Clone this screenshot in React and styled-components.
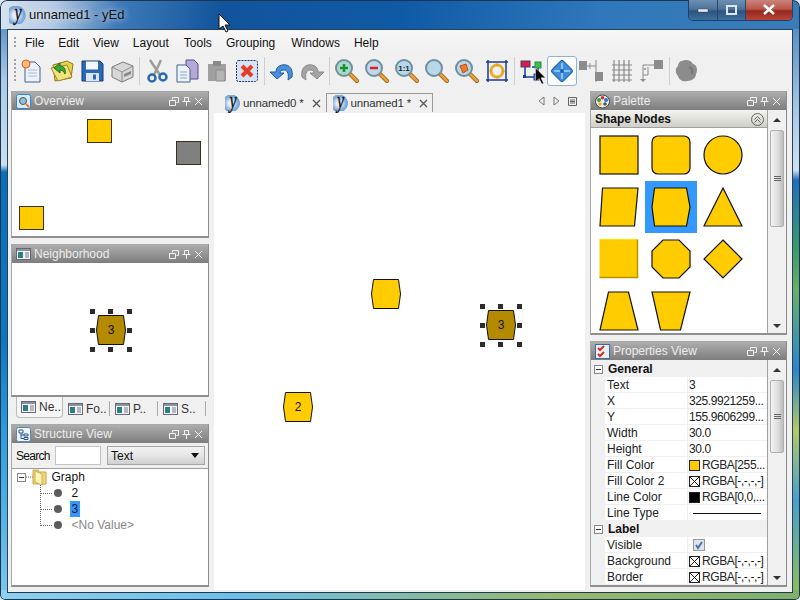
import React from 'react';
import styled, { createGlobalStyle } from 'styled-components';

const GlobalStyle = createGlobalStyle`
  html, body { margin: 0; padding: 0; }
  body { width: 800px; height: 600px; overflow: hidden; font-family: "Liberation Sans", Arial, sans-serif; background: #dfe8f0; }
`;

const Window = styled.div`
  position: relative;
  width: 800px;
  height: 600px;
  display: flex;
  flex-direction: column;
  overflow: hidden;
  border-radius: 7px 7px 5px 5px;
  box-shadow: inset 0 0 0 1px #1d3550;
  background:
    linear-gradient(90deg, #8fd0ee 0%, #6cbfe6 30%, #9ab86a 70%, #7fb069 100%) bottom / 100% 10px no-repeat,
    linear-gradient(100deg, #d9e4f0 0, #b4c9e2 7%, #3f7ab8 15%, #11549b 28%, #0f5aa5 50%, #2f78bb 75%, #3a7cb8 100%) top / 100% 29px no-repeat,
    linear-gradient(180deg, #3a7cb8 0, #a9cbe6 80px, #c9dff0 165px, #0a6fbb 172px, #0a78c0 340px, #2a9ddb 430px, #79c6ea 590px) left / 50% 100% no-repeat,
    linear-gradient(180deg, #3a7cb8 0, #a8c8e0 110px, #d0e2ee 170px, #1f6fbb 180px, #3c9a6a 250px, #6aaf6a 290px, #2b86c8 370px, #b5c866 430px, #4a9fc8 500px, #8cbc60 590px) right / 50% 100% no-repeat;
`;

const TitleBar = styled.div`
  height: 29px;
  flex: none;
  display: flex;
  align-items: center;
  padding: 0 7px 0 9px;
  gap: 2px;
`;

const TitleText = styled.span`
  font-size: 13px;
  color: #101010;
  text-shadow: 0 0 6px #fff;
`;

const Logo = styled.span`
  width: ${p => p.$s}px;
  height: ${p => p.$s}px;
  flex: none;
  display: inline-flex;
  align-items: center;
  justify-content: center;
  background: radial-gradient(circle at 38% 52%, #e6eef8 0 20%, #7fa8d8 55%, #7fa8d8 66%, transparent 70%);
  font-family: "Liberation Serif", serif;
  font-style: italic;
  font-size: 16px;
  line-height: 1;
  color: #0d1420;
  -webkit-text-stroke: 0.3px #0d1420;
  & > span { display: block; transform: translateY(-2px) scale(1, 1.45); }
`;

const WindowButtons = styled.div`
  margin-left: auto;
  margin-top: -9px;
  height: 20px;
  display: flex;
  border: 1px solid #1e3f66;
  border-top: none;
  border-radius: 0 0 5px 5px;
  overflow: hidden;
`;

const WindowButton = styled.div`
  width: ${p => p.$w}px;
  display: flex;
  align-items: center;
  justify-content: center;
  background: ${p => p.$close
    ? 'linear-gradient(180deg, #c9847c 0%, #b9564a 45%, #96281e 55%, #b8443a 100%)'
    : 'linear-gradient(180deg, #6c8fb2 0%, #4f7398 45%, #2a5580 55%, #3f6f9e 100%)'};
  border-left: ${p => p.$first ? 'none' : '1px solid #21486f'};
`;

const Client = styled.div`
  flex: 1;
  margin: 0 7px 7px 7px;
  min-height: 0;
  display: flex;
  flex-direction: column;
  background: #f0f0f0;
  border: 1px solid #24405c;
  border-bottom-color: #1d3a55;
`;

const MenuBar = styled.div`
  height: 24px;
  box-sizing: border-box;
  flex: none;
  display: flex;
  align-items: center;
  padding: 2px 0 0 6px;
  background: linear-gradient(180deg, #f7f7f7, #f0f0f0);
`;

const Grip = styled.div`
  width: 2px;
  height: ${p => p.$h}px;
  margin-right: ${p => p.$m}px;
  flex: none;
  background: repeating-linear-gradient(180deg, #a0a0a0 0 2px, transparent 2px 4px);
`;

const MenuItem = styled.span`
  font-size: 12px;
  color: #111;
  margin-right: ${p => p.$gap}px;
`;

const Toolbar = styled.div`
  height: 33px;
  flex: none;
  display: flex;
  align-items: center;
  padding-left: 6px;
`;

const ToolButton = styled.div`
  width: 30px;
  height: 30px;
  flex: none;
  display: flex;
  align-items: center;
  justify-content: center;
  box-sizing: border-box;
  border: ${p => p.$active ? '1px solid #8fb3d3' : '1px solid transparent'};
  border-radius: 3px;
  background: ${p => p.$active ? '#fff' : 'transparent'};
`;

const ToolSep = styled.div`
  width: 1px;
  height: 28px;
  margin: 0 2px;
  flex: none;
  background: #cfcfcf;
`;

const Main = styled.div`
  flex: 1;
  min-height: 0;
  display: grid;
  grid-template-columns: 198px 1fr 197px;
  column-gap: 5px;
  padding: 4px 5px 5px 3px;
`;

const Column = styled.div`
  display: flex;
  flex-direction: column;
  gap: 6px;
  min-height: 0;
`;

const Panel = styled.section`
  flex: ${p => p.$h ? 'none' : 1};
  height: ${p => p.$h ? `${p.$h}px` : 'auto'};
  min-height: 0;
  display: flex;
  flex-direction: column;
  box-sizing: border-box;
  border: 1px solid #a8a8a8;
  border-right-color: #8c8c8c;
  border-bottom: 2px solid #8f8f8f;
  background: #fff;
`;

const PanelHeader = styled.header`
  height: 18px;
  flex: none;
  display: flex;
  align-items: center;
  gap: 3px;
  padding: 0 5px 0 4px;
  background: linear-gradient(180deg, #adadad 0%, #7d7d7d 100%);
  color: #ececec;
  font-size: 12px;
`;

const HeaderTools = styled.div`
  margin-left: auto;
  display: flex;
  gap: 3px;
  align-items: center;
`;

const PanelBody = styled.div`
  flex: 1;
  min-height: 0;
  position: relative;
  background: #fff;
`;

const OverviewBox = styled.div`
  position: absolute;
  left: ${p => p.$x}px;
  top: ${p => p.$y}px;
  width: 25px;
  height: 24px;
  box-sizing: border-box;
  background: ${p => p.$bg};
  border: 1px solid #3a3018;
`;

const GraphNode = styled.div`
  position: absolute;
  left: ${p => p.$x}px;
  top: ${p => p.$y}px;
  width: 30px;
  height: 30px;
`;

const NodeLabel = styled.span`
  position: absolute;
  inset: 0;
  display: flex;
  align-items: center;
  justify-content: center;
  font-size: 12px;
  color: #111;
`;

const Handle = styled.span`
  position: absolute;
  left: ${p => p.$x}px;
  top: ${p => p.$y}px;
  width: 5px;
  height: 5px;
  background: #2c2c2c;
`;

const SideTabs = styled.div`
  height: 21px;
  flex: none;
  margin-top: -6px;
  display: flex;
  padding-left: 5px;
`;

const SideTab = styled.div`
  width: ${p => p.$w}px;
  box-sizing: border-box;
  display: flex;
  align-items: center;
  gap: 3px;
  padding-left: ${p => p.$active ? 4 : 5}px;
  font-size: 12px;
  color: #333;
  margin-top: 4px;
  height: 15px;
  border-right: ${p => p.$active ? 'none' : '1px solid #a8a8a8'};
  ${p => p.$active && `
    margin-top: 0;
    height: 21px;
    background: #f6f6f6;
    border: 1px solid #bcbcbc;
    border-top: none;
    border-radius: 0 0 4px 4px;
  `}
`;

const SearchRow = styled.div`
  height: 25px;
  flex: none;
  display: flex;
  align-items: center;
  gap: 6px;
  padding: 0 3px 0 4px;
  background: #f0f0f0;
  border-bottom: 1px solid #a0a0a0;
  font-size: 12px;
  color: #111;
`;

const SearchLabel = styled.span`
  width: 33px;
  font-size: 12px;
  letter-spacing: -0.7px;
  white-space: nowrap;
`;

const SearchInput = styled.div`
  width: 46px;
  height: 19px;
  box-sizing: border-box;
  background: #fff;
  border: 1px solid #c4c4c4;
`;

const Select = styled.div`
  flex: 1;
  height: 19px;
  box-sizing: border-box;
  display: flex;
  align-items: center;
  justify-content: space-between;
  padding: 0 5px 0 3px;
  border: 1px solid #a6a6a6;
  background: linear-gradient(180deg, #f2f2f2 0%, #e6e6e6 50%, #cfcfcf 100%);
`;

const Caret = styled.span`
  width: 0;
  height: 0;
  border: 4px solid transparent;
  border-top: 5px solid #111;
  border-bottom: none;
`;

const Tree = styled.div`
  padding: 0 0 0 5px;
  font-size: 12px;
  color: #111;
`;

const TreeRow = styled.div`
  height: 16px;
  display: flex;
  align-items: center;
`;

const TreeChildren = styled.div`
  margin-left: 23px;
  position: relative;
`;

const TreeRail = styled.span`
  position: absolute;
  left: 0;
  top: 0;
  height: 41px;
  border-left: 1px dotted #666;
`;

const Connector = styled.span`
  width: 12px;
  border-top: 1px dotted #666;
  margin-right: 2px;
`;

const Bullet = styled.span`
  width: 8px;
  height: 8px;
  border-radius: 50%;
  background: #5c5c5c;
  margin-right: 8px;
`;

const TreeLabel = styled.span`
  padding: 0 1.500px;
  line-height: 16px;
  color: ${p => p.$muted ? '#888' : '#111'};
  background: ${p => p.$selected ? '#3399ff' : 'transparent'};
`;

const ExpandBox = styled.span`
  width: 9px;
  height: 9px;
  flex: none;
  box-sizing: border-box;
  border: 1px solid #8a8a8a;
  background: #fafafa;
  display: flex;
  align-items: center;
  justify-content: center;
  &::before { content: ''; width: 5px; height: 1px; background: #333; }
`;

const Center = styled.div`
  display: flex;
  flex-direction: column;
  min-height: 0;
  margin-bottom: -3px;
`;

const DocTabs = styled.div`
  height: 22px;
  box-sizing: border-box;
  flex: none;
  display: flex;
  align-items: flex-start;
  padding: 2px 8px 0 10px;
  gap: 1px;
`;

const DocTab = styled.div`
  height: 19px;
  box-sizing: border-box;
  display: flex;
  align-items: center;
  gap: 2px;
  padding: 0 ${p => p.$active ? 4 : 3}px 0 ${p => p.$active ? 6 : 0}px;
  font-size: 11.5px;
  letter-spacing: -0.15px;
  color: #333;
  border: 1px solid ${p => p.$active ? '#9a9a9a' : 'transparent'};
  border-bottom: none;
`;

const TabClose = styled.span`
  margin-left: 6px;
  display: flex;
`;

const TabNav = styled.div`
  margin-left: auto;
  margin-top: 3px;
  display: flex;
  gap: 8px;
  align-items: center;
`;

const Canvas = styled.div`
  flex: 1;
  position: relative;
  background: #fff;
`;

const PaletteHead = styled.div`
  height: 18px;
  flex: none;
  display: flex;
  align-items: center;
  justify-content: space-between;
  padding: 1px 3px 0 4px;
  box-sizing: border-box;
  width: 176px;
  border-bottom: 1px solid #a0a0a0;
  background: linear-gradient(180deg, #f4f4f0, #cfcfc8);
  font-size: 12px;
  font-weight: 700;
  color: #111;
`;

const SplitRow = styled.div`
  flex: 1;
  min-height: 0;
  display: flex;
`;

const SplitMain = styled.div`
  width: 176px;
  flex: none;
  display: flex;
  flex-direction: column;
  min-height: 0;
  border-right: 1px solid #a0a0a0;
`;

const ShapeGrid = styled.div`
  flex: 1;
  min-height: 0;
  overflow: hidden;
  display: grid;
  grid-template-columns: repeat(3, 52px);
  grid-auto-rows: 52px;
  padding: 1px 0 0 2px;
`;

const ShapeCell = styled.div`
  display: flex;
  align-items: center;
  justify-content: center;
  background: ${p => p.$selected ? '#3399ff' : 'transparent'};
`;

const ScrollBar = styled.div`
  flex: 1;
  display: flex;
  flex-direction: column;
  align-items: center;
  background: #f0f0f0;
  padding: 0 1px;
`;

const ScrollArrow = styled.span`
  height: ${p => p.$up ? 20 : 14}px;
  flex: none;
  display: flex;
  align-items: center;
  justify-content: center;
  &::before {
    content: '';
    border: 4px solid transparent;
    ${p => p.$up
      ? 'border-bottom: 4px solid #333; border-top: none;'
      : 'border-top: 4px solid #333; border-bottom: none;'}
  }
`;

const ScrollThumb = styled.div`
  width: 14px;
  height: ${p => p.$h}px;
  flex: none;
  margin-bottom: auto;
  box-sizing: border-box;
  display: flex;
  align-items: center;
  justify-content: center;
  border: 1px solid #b0b0b0;
  border-radius: 2px;
  background: linear-gradient(90deg, #f4f4f4, #dcdcdc 60%, #bcbcbc);
  &::before {
    content: '';
    width: 7px;
    height: 6px;
    background: repeating-linear-gradient(180deg, #666 0 1px, transparent 1px 2px);
  }
`;

const PropList = styled.div`
  flex: 1;
  min-height: 0;
  overflow: hidden;
  padding-top: 1px;
  font-size: 12px;
  color: #222;
  background: #f0f0f0;
`;

const PropSection = styled.div`
  height: 16px;
  display: flex;
  align-items: center;
  gap: 5px;
  padding-left: 3px;
  font-weight: 700;
  font-size: 12px;
  color: #111;
`;

const PropRow = styled.div`
  height: 16px;
  display: grid;
  grid-template-columns: 80px 1fr;
  margin-left: 14px;
  padding-left: 2px;
  box-sizing: border-box;
  align-items: center;
  white-space: nowrap;
  background: #fff;
  box-shadow: inset 0 -1px 0 #efefef;
`;

const PropValue = styled.span`
  display: flex;
  align-items: center;
  gap: 2px;
  height: 16px;
  padding-left: 1px;
  border-left: 1px solid #efefef;
  letter-spacing: -0.4px;
  overflow: hidden;
`;

const Swatch = styled.span`
  width: 11px;
  height: 11px;
  flex: none;
  box-sizing: border-box;
  border: 1px solid #222;
  background: ${p => p.$c};
`;

const NoColorBox = styled.svg`
  flex: none;
`;

const LineSample = styled.span`
  width: 68px;
  height: 1px;
  margin-left: 4px;
  background: #111;
`;

const CheckBox = styled.span`
  width: 12px;
  height: 12px;
  margin-left: 4px;
  box-sizing: border-box;
  border: 1px solid #9a9a9a;
  background: #dfe3ea;
  display: flex;
  align-items: center;
  justify-content: center;
`;

const Cursor = styled.svg`
  position: absolute;
  left: ${p => p.$x}px;
  top: ${p => p.$y}px;
`;

const YLogo = ({ size = 16 }) => (
  <Logo $s={size}><span>y</span></Logo>
);

const HeaderIcons = () => (
  <HeaderTools>
    <svg width="10" height="9" viewBox="0 0 10 9" fill="none" stroke="#f2f2f2">
      <path d="M3.500 2.500V.5h6v5h-2M.5 3.500h6v5h-6z" />
    </svg>
    <svg width="9" height="9" viewBox="0 0 9 9" fill="none" stroke="#f2f2f2">
      <path d="M2.500.5h4v4h-4zM.5 4.500h8M4.500 5v4" />
    </svg>
    <svg width="9" height="9" viewBox="0 0 9 9" fill="none" stroke="#f2f2f2">
      <path d="M1 1l7 7M8 1L1 8" />
    </svg>
  </HeaderTools>
);

const MiniWin = () => (
  <svg width="15" height="12" viewBox="0 0 15 12">
    <rect x=".5" y=".5" width="14" height="11" fill="#f4f6f8" stroke="#667" />
    <rect x="1" y="1" width="13" height="2" fill="#8a94a0" />
    <rect x="2" y="4" width="5" height="6" fill="#2d7f86" />
    <path d="M9 5h4M9 7h4M9 9h4" stroke="#778" />
  </svg>
);

const PanelIcon = ({ kind }) => {
  if (kind === 'overview') return (
    <svg width="15" height="15" viewBox="0 0 15 15">
      <rect x=".5" y=".5" width="14" height="14" rx="2" fill="#d8ecfa" stroke="#2a86d8" />
      <circle cx="7" cy="7" r="3.500" fill="#8fc0dc" stroke="#555" />
      <path d="M10 10l3 3" stroke="#e8802a" strokeWidth="2" />
    </svg>
  );
  if (kind === 'palette') return (
    <svg width="15" height="15" viewBox="0 0 15 15">
      <ellipse cx="7.500" cy="7.500" rx="7" ry="6.500" fill="#eee" stroke="#444" />
      <circle cx="4" cy="6" r="2" fill="#2c9c3c" />
      <circle cx="7.500" cy="3.800" r="1.800" fill="#d83020" />
      <circle cx="11" cy="6" r="2" fill="#2a70d0" />
      <circle cx="10" cy="10" r="1.800" fill="#555" />
      <circle cx="5" cy="10" r="1.800" fill="#e8b020" />
    </svg>
  );
  if (kind === 'structure') return (
    <svg width="15" height="15" viewBox="0 0 15 15">
      <rect x=".5" y=".5" width="14" height="14" rx="2" fill="#f0f4f8" stroke="#5a86b0" />
      <path d="M3 3h4v3H3zM8 7h4v2H8zM8 10.500h4v2H8zM5 6v5.500h3M5 8h3" fill="none" stroke="#2a5a90" />
    </svg>
  );
  if (kind === 'props') return (
    <svg width="15" height="15" viewBox="0 0 15 15">
      <rect x=".5" y=".5" width="14" height="14" fill="#e8eef8" stroke="#3a6ab0" />
      <path d="M3 4l2 2 4-4M3 10l2 2 4-4" fill="none" stroke="#d03020" strokeWidth="2" />
    </svg>
  );
  return <MiniWin />;
};

const HEX = '2.500,0.500 27.500,0.500 29.500,15 27.500,29.500 2.500,29.500 0.500,15';

const HexNode = ({ x, y, label, selected }) => (
  <GraphNode $x={x} $y={y}>
    <svg width="30" height="30" viewBox="0 0 30 30">
      <polygon points={HEX} fill={selected ? '#b38a00' : '#ffcc00'} stroke="#111" />
    </svg>
    {label && <NodeLabel>{label}</NodeLabel>}
    {selected && [[-6, -6], [12, -6], [31, -6], [-6, 13], [31, 13], [-6, 32], [12, 32], [31, 32]].map(([hx, hy]) => (
      <Handle key={`${hx}-${hy}`} $x={hx} $y={hy} />
    ))}
  </GraphNode>
);

const Shape = ({ kind }) => {
  const common = { fill: '#ffcc00', stroke: '#111', strokeWidth: 1.2 };
  return (
    <svg width="40" height="40" viewBox="-0.5 -0.5 40 40">
      {kind === 'rect' && <rect x=".5" y=".5" width="38" height="38" {...common} />}
      {kind === 'round' && <rect x=".5" y=".5" width="38" height="38" rx="6" {...common} />}
      {kind === 'circle' && <circle cx="19.500" cy="19.500" r="19" {...common} />}
      {kind === 'para' && <polygon points="3,.5 38.500,.5 35,38.500 .5,38.500" {...common} />}
      {kind === 'hex' && <polygon points="3,.5 35,.5 38.500,19.500 35,38.500 3,38.500 .5,19.500" {...common} />}
      {kind === 'tri' && <polygon points="19.500,.5 38.500,38.500 .5,38.500" {...common} />}
      {kind === 'bevel' && (
        <>
          <rect x="0" y="0" width="38" height="38" fill="#ffcc00" />
          <path d="M0 0h38" stroke="#ffe600" strokeWidth="1" />
          <path d="M38 0v38H0" fill="none" stroke="#b89400" strokeWidth="1.500" />
        </>
      )}
      {kind === 'octagon' && <polygon points="11.500,.5 27.500,.5 38.500,11.500 38.500,27.500 27.500,38.500 11.500,38.500 .5,27.500 .5,11.500" {...common} />}
      {kind === 'diamond' && <polygon points="19.500,.5 38.500,19.500 19.500,38.500 .5,19.500" {...common} />}
      {kind === 'trap' && <polygon points="9,.5 29,.5 38.500,38.500 .5,38.500" {...common} />}
      {kind === 'trap2' && <polygon points=".5,.5 38.500,.5 29,38.500 9,38.500" {...common} />}
    </svg>
  );
};

const Lens = ({ children, fill = '#b8d8ea' }) => (
  <svg width="26" height="26" viewBox="0 0 26 26">
    <path d="M15 15l8 8" stroke="#8a5a20" strokeWidth="4" strokeLinecap="round" />
    <path d="M15 15l8 8" stroke="#f0a030" strokeWidth="2.500" strokeLinecap="round" />
    <circle cx="10" cy="10" r="8" fill={fill} stroke="#6f8f9f" strokeWidth="2" />
    {children}
  </svg>
);

const TOOLS = {
  newDoc: (
    <svg width="24" height="26" viewBox="0 0 24 26">
      <path d="M5 4h10l5 5v15H5z" fill="#eef3fb" stroke="#44608a" />
      <path d="M8 12h9M8 15h9M8 18h9" stroke="#a8bcd8" />
      <circle cx="6" cy="6" r="4" fill="#f7c36a" stroke="#e0503a" />
    </svg>
  ),
  open: (
    <svg width="26" height="24" viewBox="0 0 26 24">
      <path d="M4 6l14-4 6 3-2 14-16 3z" fill="#e8d24a" stroke="#8a7a20" />
      <path d="M2 9l16-3 5 12-14 4z" fill="#f2e27a" stroke="#9a8a30" />
      <path d="M11 4l-6 5 6 5v-3c3 0 4 2 5 4 1-5-1-8-5-8z" fill="#3ca83c" stroke="#1c6c1c" />
    </svg>
  ),
  save: (
    <svg width="24" height="24" viewBox="0 0 24 24">
      <path d="M2 2h18l3 3v17H2z" fill="#2a68b8" stroke="#123c78" />
      <rect x="6" y="2.500" width="12" height="8" fill="#f4f8ff" />
      <rect x="6" y="14" width="13" height="8" fill="#dfe6f0" />
      <rect x="13" y="15.500" width="3" height="5" fill="#2a68b8" />
    </svg>
  ),
  print: (
    <svg width="26" height="24" viewBox="0 0 26 24">
      <path d="M3 8l11-5 10 4v11l-11 5-10-5z" fill="#d8d8d8" stroke="#7a7a7a" />
      <path d="M3 8l10 5 11-6" fill="none" stroke="#8a8a8a" />
      <path d="M13 13v10" stroke="#8a8a8a" />
      <path d="M15 15l7-3v3l-7 3z" fill="#888" />
    </svg>
  ),
  cut: (
    <svg width="24" height="26" viewBox="0 0 24 26">
      <path d="M5 2l10 15M16 2L9 17" stroke="#9c9c9c" strokeWidth="2.500" />
      <circle cx="7" cy="20" r="3.500" fill="none" stroke="#2a6ab0" strokeWidth="2.500" />
      <circle cx="18" cy="19" r="3.500" fill="none" stroke="#2a6ab0" strokeWidth="2.500" />
    </svg>
  ),
  copy: (
    <svg width="24" height="24" viewBox="0 0 24 24">
      <path d="M11 1h8l4 4v15H11z" fill="#b6a8d8" stroke="#5a4a8a" />
      <path d="M2 6h9l4 4v13H2z" fill="#eef3fb" stroke="#44608a" />
      <path d="M5 13h7M5 16h7M5 19h7" stroke="#8aa4c8" />
    </svg>
  ),
  paste: (
    <svg width="22" height="24" viewBox="0 0 22 24">
      <path d="M2 5h18v17H2z" fill="#a0a0a0" />
      <path d="M7 2h8v5H7z" fill="#8a8a8a" />
      <path d="M10 11h9v11h-9z" fill="#b4b4b4" stroke="#8c8c8c" />
    </svg>
  ),
  remove: (
    <svg width="22" height="22" viewBox="0 0 22 22">
      <rect x=".5" y=".5" width="21" height="21" rx="2" fill="#d8e2f0" stroke="#17376e" strokeDasharray="2 1" />
      <path d="M6 6l10 10M16 6L6 16" stroke="#e0402a" strokeWidth="4" />
    </svg>
  ),
  undo: (
    <svg width="24" height="22" viewBox="0 0 24 22">
      <path d="M6 12C6 6 12 4 16 5c5 1 7 6 6 12l-4 3c1-5 0-10-4-10-3 0-4 1-4 3l4 0-7 6-7-7z" fill="#4a90d8" stroke="#1f5ca8" />
    </svg>
  ),
  redo: (
    <svg width="24" height="22" viewBox="0 0 24 22">
      <path d="M18 12C18 6 12 4 8 5 3 6 1 11 2 17l4 3c-1-5 0-10 4-10 3 0 4 1 4 3l-4 0 7 6 7-7z" fill="#a4a4a4" stroke="#8a8a8a" />
    </svg>
  ),
  zoomIn: <Lens fill="#a8d8c8"><path d="M6 10h8M10 6v8" stroke="#1a9030" strokeWidth="2.500" /></Lens>,
  zoomOut: <Lens fill="#c0d8e8"><path d="M6 10h8" stroke="#d82030" strokeWidth="2.500" /></Lens>,
  zoomOne: <Lens><text x="10" y="13" textAnchor="middle" fontFamily="Liberation Sans" fontWeight="700" fontSize="8" fill="#222">1:1</text></Lens>,
  zoomPlain: <Lens />,
  zoomSel: <Lens><path d="M6 8l6-2 2 6-5 3z" fill="#f07a30" stroke="#c05010" /></Lens>,
  fit: (
    <svg width="24" height="24" viewBox="0 0 24 24">
      <path d="M1 3h22M1 21h22M3 1v22M21 1v22" stroke="#1a3a9a" strokeWidth="1.500" />
      <circle cx="12" cy="12" r="6" fill="none" stroke="#e8b030" strokeWidth="3" />
      <path d="M12 4l-2 3h4zM12 20l-2-3h4zM4 12l3-2v4zM20 12l-3-2v4z" fill="#e8a020" />
    </svg>
  ),
  layout: (
    <svg width="24" height="24" viewBox="0 0 24 24">
      <path d="M5 7v11h11M12 8h6v10" fill="none" stroke="#1a3aa0" strokeWidth="1.500" />
      <rect x="1" y="2" width="9" height="6" fill="#d81860" stroke="#444" />
      <rect x="15" y="3" width="6" height="6" fill="#40c040" stroke="#285" />
      <rect x="3" y="16" width="3" height="3" fill="#1a3aa0" />
      <rect x="14" y="15" width="5" height="6" fill="#4a90d8" stroke="#1a3aa0" />
    </svg>
  ),
  move: (
    <svg width="26" height="26" viewBox="0 0 26 26">
      <rect x="5" y="5" width="16" height="16" rx="2" transform="rotate(45 13 13)" fill="#3f8fe0" stroke="#1f5fb0" />
      <path d="M13 5v16M5 13h16" stroke="#8cc4f4" strokeWidth="2" />
      <circle cx="13" cy="13" r="2" fill="#1f5fb0" />
    </svg>
  ),
  ortho: (
    <svg width="26" height="24" viewBox="0 0 26 24">
      <rect x="0" y="2" width="8" height="9" fill="#8c8c8c" />
      <rect x="16" y="13" width="8" height="9" fill="#8c8c8c" />
      <path d="M8 7h9M17 1v22M11 4v6" stroke="#8c8c8c" />
    </svg>
  ),
  grid: (
    <svg width="22" height="22" viewBox="0 0 22 22">
      <path d="M1 5h20M1 10h20M1 15h20M1 20h20M3 0v22M8 0v22M13 0v22M18 0v22" stroke="#8a8a8a" strokeWidth="1.200" />
    </svg>
  ),
  port: (
    <svg width="24" height="24" viewBox="0 0 24 24">
      <rect x="14" y="1" width="9" height="9" fill="#8c8c8c" />
      <path d="M14 6H3v10h5V8M3 16v6" fill="none" stroke="#8c8c8c" />
      <path d="M0 20h6l-3 3z" fill="#8c8c8c" />
      <circle cx="5" cy="10" r="1" fill="#8c8c8c" />
    </svg>
  ),
  blob: (
    <svg width="24" height="24" viewBox="0 0 24 24">
      <path d="M7 2c4-2 9-1 11 3 4 1 5 6 3 10 0 4-4 7-9 7-4 1-8-1-9-5-3-3-3-8 0-10 0-3 2-5 4-5z" fill="#8c8c8c" />
      <path d="M14 8c3 1 4 4 3 7" fill="none" stroke="#757575" strokeWidth="2" />
    </svg>
  ),
};

const TOOL_LAYOUT = [
  'newDoc', 'open', 'save', 'print', '|', 'cut', 'copy', 'paste', 'remove', '|', 'undo', 'redo', '|',
  'zoomIn', 'zoomOut', 'zoomOne', 'zoomPlain', 'zoomSel', 'fit', '|', 'layout', 'move', 'ortho', 'grid', 'port', '|', 'blob',
];

const MENUS = [['File', 14], ['Edit', 14], ['View', 14], ['Layout', 15], ['Tools', 14], ['Grouping', 16], ['Windows', 14], ['Help', 0]];

const SHAPES = ['rect', 'round', 'circle', 'para', 'hex', 'tri', 'bevel', 'octagon', 'diamond', 'trap', 'trap2'];

const NoColor = () => (
  <NoColorBox width="11" height="11" viewBox="0 0 11 11">
    <rect x=".5" y=".5" width="10" height="10" fill="#fff" stroke="#222" />
    <path d="M1 1l9 9M10 1l-9 9" stroke="#222" />
  </NoColorBox>
);

const Prop = ({ name, children }) => (
  <PropRow>
    <span>{name}</span>
    <PropValue>{children}</PropValue>
  </PropRow>
);

export default function App() {
  return (
    <>
      <GlobalStyle />
      <Window>
        <TitleBar>
          <YLogo size={18} />
          <TitleText>unnamed1 - yEd</TitleText>
          <WindowButtons>
            <WindowButton $w={28} $first>
              <svg width="12" height="6"><rect x="1" y="2" width="10" height="3" fill="#eef" stroke="#345" strokeWidth=".5" /></svg>
            </WindowButton>
            <WindowButton $w={27}>
              <svg width="11" height="10"><rect x="1" y="1" width="9" height="8" fill="none" stroke="#dde6f0" strokeWidth="2" /></svg>
            </WindowButton>
            <WindowButton $w={46} $close>
              <svg width="14" height="11"><path d="M2 1l10 9M12 1L2 10" stroke="#fff" strokeWidth="2.500" /></svg>
            </WindowButton>
          </WindowButtons>
        </TitleBar>

        <Client>
          <MenuBar>
            <Grip $h={12} $m={9} />
            {MENUS.map(([label, gap]) => <MenuItem key={label} $gap={gap}>{label}</MenuItem>)}
          </MenuBar>

          <Toolbar>
            <Grip $h={24} $m={1} />
            {TOOL_LAYOUT.map((t, i) => t === '|'
              ? <ToolSep key={i} />
              : <ToolButton key={t} $active={t === 'move'}>{TOOLS[t]}</ToolButton>)}
          </Toolbar>

          <Main>
            <Column>
              <Panel $h={147}>
                <PanelHeader><PanelIcon kind="overview" /> Overview<HeaderIcons /></PanelHeader>
                <PanelBody>
                  <OverviewBox $x={75} $y={9} $bg="#ffcc00" />
                  <OverviewBox $x={164} $y={31} $bg="#808080" />
                  <OverviewBox $x={7} $y={96} $bg="#ffcc00" />
                </PanelBody>
              </Panel>

              <Panel $h={153}>
                <PanelHeader><PanelIcon /> Neighborhood<HeaderIcons /></PanelHeader>
                <PanelBody>
                  <HexNode x={84} y={52} label="3" selected />
                </PanelBody>
              </Panel>
              <SideTabs>
                <SideTab $active $w={47}><MiniWin /> Ne..</SideTab>
                <SideTab $w={47}><MiniWin /> Fo..</SideTab>
                <SideTab $w={48}><MiniWin /> P..</SideTab>
                <SideTab $w={48}><MiniWin /> S..</SideTab>
              </SideTabs>

              <Panel>
                <PanelHeader><PanelIcon kind="structure" /> Structure View<HeaderIcons /></PanelHeader>
                <SearchRow>
                  <SearchLabel>Search</SearchLabel>
                  <SearchInput />
                  <Select>Text<Caret /></Select>
                </SearchRow>
                <PanelBody>
                  <Tree>
                    <TreeRow>
                      <ExpandBox />
                      <svg width="24" height="16" viewBox="0 0 24 16">
                        <path d="M0 8h7" stroke="#666" strokeDasharray="1 1" />
                        <path d="M7 1h5l1 2h7v12H7z" fill="#f0d878" stroke="#c8a848" />
                        <path d="M9 2l7 3v11l-7-3z" fill="#fff2b8" stroke="#d0b050" />
                      </svg>
                      <TreeLabel>Graph</TreeLabel>
                    </TreeRow>
                    <TreeChildren>
                      <TreeRail />
                      <TreeRow><Connector /><Bullet /><TreeLabel>2</TreeLabel></TreeRow>
                      <TreeRow><Connector /><Bullet /><TreeLabel $selected>3</TreeLabel></TreeRow>
                      <TreeRow><Connector /><Bullet /><TreeLabel $muted>&lt;No Value&gt;</TreeLabel></TreeRow>
                    </TreeChildren>
                  </Tree>
                </PanelBody>
              </Panel>
            </Column>

            <Center>
              <DocTabs>
                <DocTab>
                  <YLogo />unnamed0 *
                  <TabClose><svg width="9" height="9"><path d="M1 1l7 7M8 1L1 8" stroke="#555" strokeWidth="1.300" /></svg></TabClose>
                </DocTab>
                <DocTab $active>
                  <YLogo />unnamed1 *
                  <TabClose><svg width="9" height="9"><path d="M1 1l7 7M8 1L1 8" stroke="#555" strokeWidth="1.300" /></svg></TabClose>
                </DocTab>
                <TabNav>
                  <svg width="7" height="10"><path d="M6 1L1 5l5 4z" fill="none" stroke="#777" /></svg>
                  <svg width="7" height="10"><path d="M1 1l5 4-5 4z" fill="none" stroke="#777" /></svg>
                  <svg width="9" height="9"><path d="M.5.5h8v8h-8zM2 3h5M2 4.500h5M2 6h5" fill="none" stroke="#666" /></svg>
                </TabNav>
              </DocTabs>
              <Canvas>
                <HexNode x={157} y={166} />
                <HexNode x={69} y={279} label="2" />
                <HexNode x={272} y={197} label="3" selected />
              </Canvas>
            </Center>

            <Column>
              <Panel $h={244}>
                <PanelHeader><PanelIcon kind="palette" /> Palette<HeaderIcons /></PanelHeader>
                <SplitRow>
                  <SplitMain>
                    <PaletteHead>
                      Shape Nodes
                      <svg width="13" height="13" viewBox="0 0 13 13" fill="none" stroke="#666">
                        <circle cx="6.500" cy="6.500" r="6" />
                        <path d="M3.500 6.500l3-3 3 3M3.500 9.500l3-3 3 3" />
                      </svg>
                    </PaletteHead>
                    <ShapeGrid>
                      {SHAPES.map(s => <ShapeCell key={s} $selected={s === 'hex'}><Shape kind={s} /></ShapeCell>)}
                    </ShapeGrid>
                  </SplitMain>
                  <ScrollBar>
                    <ScrollArrow $up />
                    <ScrollThumb $h={97} />
                    <ScrollArrow />
                  </ScrollBar>
                </SplitRow>
              </Panel>

              <Panel>
                <PanelHeader><PanelIcon kind="props" /> Properties View<HeaderIcons /></PanelHeader>
                <SplitRow>
                  <SplitMain>
                    <PropList>
                      <PropSection><ExpandBox />General</PropSection>
                      <Prop name="Text">3</Prop>
                      <Prop name="X">325.9921259...</Prop>
                      <Prop name="Y">155.9606299...</Prop>
                      <Prop name="Width">30.0</Prop>
                      <Prop name="Height">30.0</Prop>
                      <Prop name="Fill Color"><Swatch $c="#ffcc00" />RGBA[255...</Prop>
                      <Prop name="Fill Color 2"><NoColor />RGBA[-,-,-,-]</Prop>
                      <Prop name="Line Color"><Swatch $c="#000" />RGBA[0,0,...</Prop>
                      <Prop name="Line Type"><LineSample /></Prop>
                      <PropSection><ExpandBox />Label</PropSection>
                      <Prop name="Visible">
                        <CheckBox>
                          <svg width="10" height="10"><path d="M2 5l2 3 4-6" fill="none" stroke="#4a6fb0" strokeWidth="2" /></svg>
                        </CheckBox>
                      </Prop>
                      <Prop name="Background"><NoColor />RGBA[-,-,-,-]</Prop>
                      <Prop name="Border"><NoColor />RGBA[-,-,-,-]</Prop>
                    </PropList>
                  </SplitMain>
                  <ScrollBar>
                    <ScrollArrow $up />
                    <ScrollThumb $h={73} />
                    <ScrollArrow />
                  </ScrollBar>
                </SplitRow>
              </Panel>
            </Column>
          </Main>
        </Client>

        <Cursor $x={218} $y={13} width="13" height="20" viewBox="0 0 13 20">
          <path d="M1 1v15l4-3 3 6 2-1-3-6h5z" fill="#fff" stroke="#111" />
        </Cursor>
        <Cursor $x={534} $y={67} width="13" height="18" viewBox="0 0 13 20">
          <path d="M1 1v15l4-3 3 6 2-1-3-6h5z" fill="#000" stroke="#fff" strokeWidth=".5" />
        </Cursor>
      </Window>
    </>
  );
}
